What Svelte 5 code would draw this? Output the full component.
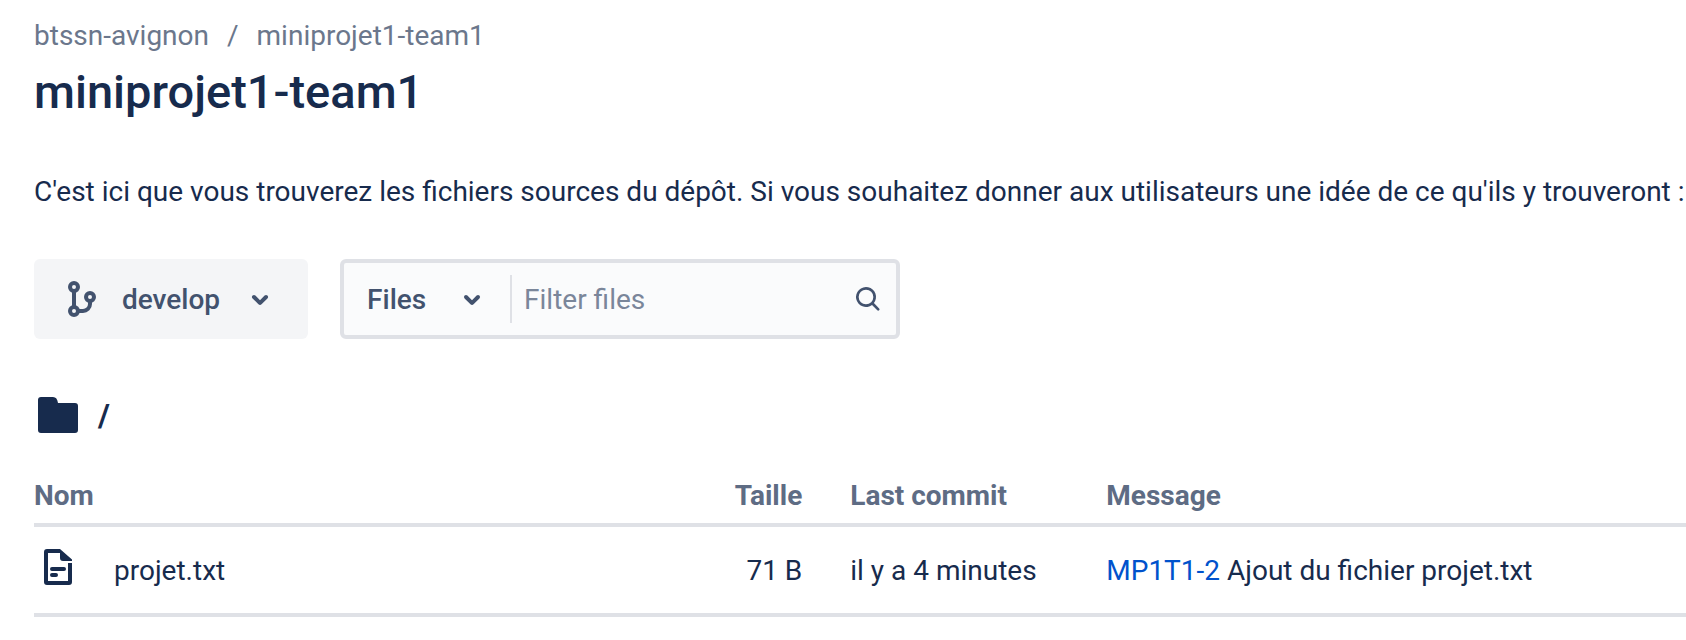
<script>
  let scope = $state('Files');
  let query = $state('');

  const files = [
    {
      name: 'projet.txt',
      size: '71 B',
      date: 'il y a 4 minutes',
      issue: 'MP1T1-2',
      message: 'Ajout du fichier projet.txt'
    }
  ];

  const shown = $derived(
    files.filter((f) => f.name.toLowerCase().includes(query.toLowerCase()))
  );
</script>

{#snippet chevron()}
  <svg class="icon" viewBox="0 0 24 24" aria-hidden="true">
    <path
      fill="currentColor"
      d="M8.292 10.293a1.009 1.009 0 000 1.419l2.939 2.965c.218.215.5.322.779.322s.556-.107.769-.322l2.93-2.955a1.01 1.01 0 000-1.419.987.987 0 00-1.406 0l-2.298 2.317-2.307-2.327a.99.99 0 00-1.406 0z"
    />
  </svg>
{/snippet}

<main>
  <nav aria-label="Breadcrumbs">
    <a href="#workspace">btssn-avignon</a>
    <span>/</span>
    <a href="#repository">miniprojet1-team1</a>
  </nav>
  <h1>miniprojet1-team1</h1>

  <p class="intro">
    C'est ici que vous trouverez les fichiers sources du dépôt. Si vous souhaitez donner aux
    utilisateurs une idée de ce qu'ils y trouveront :
  </p>

  <div class="controls">
    <button class="branch" type="button">
      <svg class="icon" viewBox="0 0 24 24" fill="none" stroke="currentColor" stroke-width="2" aria-hidden="true">
        <circle cx="8" cy="6" r="2" />
        <circle cx="8" cy="18" r="2" />
        <circle cx="16" cy="11" r="2" />
        <path d="M8 8v8M16 13v1.5a3.5 3.5 0 0 1-3.5 3.5H10" />
      </svg>
      <span>develop</span>
      {@render chevron()}
    </button>

    <form class="filter" role="search" onsubmit={(e) => e.preventDefault()}>
      <div class="scope">
        <select bind:value={scope} aria-label="Scope">
          <option>Files</option>
        </select>
        <div class="arrow">{@render chevron()}</div>
      </div>
      <input type="text" placeholder="Filter files" aria-label="Filter files" bind:value={query} />
      <button class="search" type="submit" aria-label="Search">
        <svg viewBox="0 0 24 24" aria-hidden="true">
          <path
            fill="currentColor"
            d="M16.436 15.085l3.94 4.01a1 1 0 01-1.425 1.402l-3.938-4.006a7.5 7.5 0 111.423-1.406zM10.5 16a5.5 5.5 0 100-11 5.5 5.5 0 000 11z"
          />
        </svg>
      </button>
    </form>
  </div>

  <div class="path">
    <svg class="icon" viewBox="0 0 24 24" aria-hidden="true">
      <path
        fill="currentColor"
        d="M3.5 3H9.500C11 3 11.700 4 12 6H20.500A1.500 1.500 0 0 1 22 7.500V19.500A1.500 1.500 0 0 1 20.500 21H3.500A1.500 1.500 0 0 1 2 19.500V4.500A1.500 1.500 0 0 1 3.500 3z"
      />
    </svg>
    <span>/</span>
  </div>

  <table>
    <colgroup>
      <col class="col-name" />
      <col class="col-size" />
      <col class="col-date" />
      <col />
    </colgroup>
    <thead>
      <tr>
        <th scope="col">Nom</th>
        <th scope="col" class="size">Taille</th>
        <th scope="col">Last commit</th>
        <th scope="col">Message</th>
      </tr>
    </thead>
    <tbody>
      {#each shown as file (file.name)}
        <tr>
          <td>
            <div class="file">
              <svg class="icon" viewBox="0 0 24 24" aria-hidden="true">
                <path
                  fill="currentColor"
                  d="M6.500 3H13L19 8.300V9H14.500A1.500 1.500 0 0 1 13 7.500V5H7V19H17V10H19V19.500A1.500 1.500 0 0 1 17.500 21H6.500A1.500 1.500 0 0 1 5 19.500V4.500A1.500 1.500 0 0 1 6.500 3z"
                />
                <path
                  fill="none"
                  stroke="currentColor"
                  stroke-width="2"
                  stroke-linecap="round"
                  d="M9 13h6M9 16h2"
                />
              </svg>
              <a href="#file">{file.name}</a>
            </div>
          </td>
          <td class="size">{file.size}</td>
          <td>{file.date}</td>
          <td><a class="issue" href="#issue">{file.issue}</a> {file.message}</td>
        </tr>
      {/each}
    </tbody>
  </table>
</main>

<style>
  :global(body) {
    background: #fff;
  }

  main {
    box-sizing: border-box;
    padding: 16px 0 23px 34px;
    overflow: hidden;
    color: #172b4d;
    font-family: Roboto, 'Liberation Sans', sans-serif;
    font-size: 28px;
    line-height: 40px;
  }

  a {
    color: inherit;
    text-decoration: none;
  }

  a:hover {
    text-decoration: underline;
  }

  button,
  select,
  input {
    margin: 0;
    padding: 0;
    border: 0;
    background: none;
    color: inherit;
    font: inherit;
  }

  .icon {
    display: block;
    flex: none;
    width: 48px;
    height: 48px;
  }

  nav {
    display: flex;
    gap: 18px;
    color: #6b778c;
  }

  h1 {
    margin: 8px 0 0;
    font-size: 47px;
    font-weight: 500;
    line-height: 56px;
  }

  .intro {
    margin: 52px 0 0;
    white-space: nowrap;
  }

  .controls {
    display: flex;
    gap: 32px;
    margin-top: 47px;
    color: #42526e;
    font-weight: 500;
  }

  .branch {
    display: flex;
    align-items: center;
    gap: 16px;
    padding: 16px 24px;
    border-radius: 6px;
    background: #f4f5f7;
  }

  .filter {
    box-sizing: border-box;
    display: flex;
    align-items: center;
    flex: 0 1 560px;
    min-width: 0;
    height: 80px;
    border: 4px solid #dfe1e6;
    border-radius: 6px;
    background: #fafbfc;
  }

  .scope {
    display: grid;
    flex: none;
    width: 166px;
    height: 48px;
    border-right: 2px solid #dfe1e6;
  }

  .scope select,
  .scope .arrow {
    grid-area: 1 / 1;
  }

  .scope select {
    appearance: none;
    padding-left: 23px;
    cursor: pointer;
  }

  .scope .arrow {
    justify-self: end;
    margin-right: 14px;
    pointer-events: none;
  }

  input {
    flex: 1;
    min-width: 0;
    padding-left: 12px;
    font-weight: 400;
  }

  .branch span,
  .scope select,
  input {
    padding-top: 2px;
  }

  input::placeholder {
    color: #7a869a;
    opacity: 1;
  }

  .search {
    flex: none;
    padding: 0 12px;
  }

  .search svg {
    display: block;
    width: 32px;
    height: 32px;
  }

  .path {
    display: flex;
    align-items: center;
    gap: 16px;
    margin-top: 52px;
    font-size: 32px;
    font-weight: 700;
  }

  table {
    width: 100%;
    margin-top: 37px;
    border-collapse: separate;
    border-spacing: 0;
    table-layout: fixed;
  }

  .col-name {
    width: 39%;
  }

  .col-size {
    width: 148px;
  }

  .col-date {
    width: 256px;
  }

  th,
  td {
    padding: 0 0 7px 24px;
    border-bottom: 4px solid #dfe1e6;
    text-align: left;
    vertical-align: top;
    white-space: nowrap;
  }

  th {
    color: #5e6c84;
    font-weight: 700;
  }

  td {
    padding-top: 24px;
    padding-bottom: 22px;
  }

  th:first-child,
  td:first-child {
    padding-left: 0;
  }

  td:first-child {
    padding-top: 16px;
  }

  .size {
    padding-right: 24px;
    text-align: right;
  }

  .file {
    display: flex;
    gap: 32px;
  }

  .file a {
    padding-top: 8px;
  }

  .issue {
    color: #0052cc;
  }
</style>
